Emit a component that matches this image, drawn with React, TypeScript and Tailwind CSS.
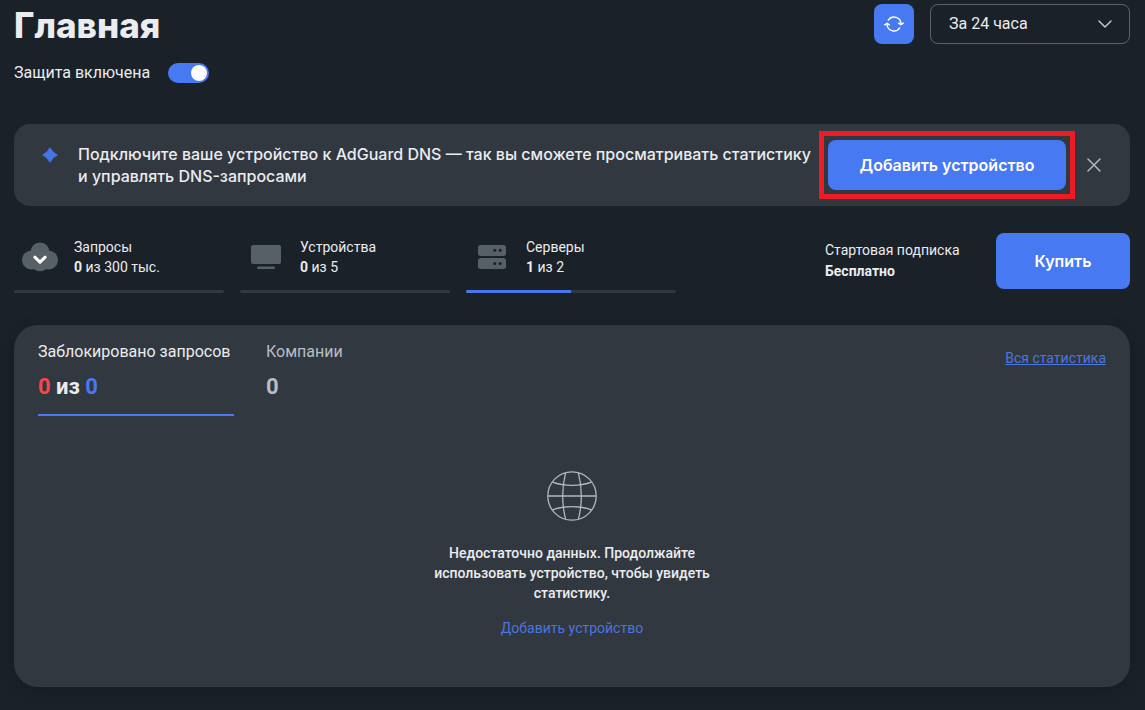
import { useState } from "react";
import type { ReactNode } from "react";

function RefreshIcon() {
  return (
    <svg width="20" height="20" viewBox="0 0 20 20" fill="none" stroke="currentColor" strokeWidth="1.4" strokeLinecap="round" strokeLinejoin="round" aria-hidden="true">
      <path d="M4.3 6.1A6.9 6.9 0 0 1 16.9 10.4" />
      <path d="M15.7 13.9A6.9 6.9 0 0 1 3.1 9.6" />
      <path d="M14.7 9.1L16.9 10.7L19.2 9.1" />
      <path d="M0.8 10.9L3.1 9.3L5.3 10.9" />
    </svg>
  );
}

function ChevronIcon() {
  return (
    <svg width="14" height="8" viewBox="0 0 14 8" fill="none" stroke="currentColor" strokeWidth="1.5" strokeLinecap="round" strokeLinejoin="round" aria-hidden="true">
      <path d="M1 1L7 7L13 1" />
    </svg>
  );
}

function SparkIcon() {
  return (
    <svg width="16" height="16" viewBox="0 0 16 16" fill="#4377ea" aria-hidden="true">
      <path d="M8 0.6Q10.4 5.6 15.4 8Q10.4 10.4 8 15.4Q5.6 10.4 0.6 8Q5.6 5.6 8 0.6Z" stroke="#4377ea" strokeWidth="0.8" strokeLinejoin="round" />
    </svg>
  );
}

function CloseIcon() {
  return (
    <svg width="14" height="14" viewBox="0 0 14 14" fill="none" stroke="currentColor" strokeWidth="1.5" strokeLinecap="round" aria-hidden="true">
      <path d="M1 1L13 13M13 1L1 13" />
    </svg>
  );
}

function CloudIcon() {
  return (
    <svg width="36" height="30" viewBox="0 0 36 30" aria-hidden="true">
      <g fill="#575f67">
        <circle cx="18" cy="9.7" r="9.3" />
        <circle cx="9.6" cy="18" r="9.6" />
        <circle cx="26.4" cy="18" r="9.6" />
        <ellipse cx="18" cy="20.5" rx="9" ry="8.8" />
      </g>
      <path d="M12.8 15.2L18 20.2L23.2 15.2" fill="none" stroke="#fff" strokeWidth="3" strokeLinecap="round" />
    </svg>
  );
}

function MonitorIcon() {
  return (
    <svg width="30" height="24" viewBox="0 0 30 24" fill="#575f67" aria-hidden="true">
      <rect width="30" height="19" rx="2" />
      <rect x="6" y="21.5" width="18" height="2.5" rx="1.2" />
    </svg>
  );
}

function ServerIcon() {
  return (
    <svg width="28" height="24" viewBox="0 0 28 24" aria-hidden="true">
      <g fill="#575f67">
        <rect width="28" height="11" rx="2.5" />
        <rect y="13" width="28" height="11" rx="2.5" />
      </g>
      <g fill="#1a2129">
        <circle cx="16.8" cy="5.3" r="1.5" />
        <circle cx="22.2" cy="5.3" r="1.5" />
        <circle cx="16.8" cy="18.6" r="1.5" />
        <circle cx="22.2" cy="18.6" r="1.5" />
      </g>
    </svg>
  );
}

function GlobeIcon() {
  return (
    <svg width="50" height="50" viewBox="0 0 50 50" fill="none" stroke="#b3b8bd" strokeWidth="1.3" aria-hidden="true">
      <circle cx="25" cy="25" r="24.2" />
      <path d="M1 25H49" />
      <path d="M18.6 1.8C15 16 15 34 18.6 48.2M31.4 1.8C35 16 35 34 31.4 48.2" />
      <path d="M5.4 11.2C17 15.4 33 15.4 44.6 11.2M5.4 38.8C17 34.6 33 34.6 44.6 38.8" />
    </svg>
  );
}

type LimitProps = { label: string; used: number; total: string; percent: number; icon: ReactNode };

function Limit({ label, used, total, percent, icon }: LimitProps) {
  return (
    <div className="w-[210px]">
      <div className="flex items-center">
        <div className="flex w-[52px] shrink-0 justify-center">{icon}</div>
        <div className="pl-2 text-sm leading-5">
          <div>{label}</div>
          <div>
            <b>{used}</b> из {total}
          </div>
        </div>
      </div>
      <div className="mt-[13px] h-[3px] overflow-hidden rounded-full bg-[#323840]">
        <div className="h-full bg-[#4778f0]" style={{ width: `${percent}%` }} />
      </div>
    </div>
  );
}

export default function App() {
  const [enabled, setEnabled] = useState(true);
  const [bannerOpen, setBannerOpen] = useState(true);

  return (
    <main className="min-h-screen bg-[#1a2129] pt-1 pr-[15px] pb-6 pl-[14px] font-['Roboto','Noto_Sans',sans-serif] text-[#ebecee]">
      <header className="flex items-start justify-between">
        <h1 className="font-['Inter','Noto_Sans',sans-serif] text-[35px] leading-[42px] font-extrabold">Главная</h1>
        <div className="flex gap-4">
          <button type="button" aria-label="Обновить" className="flex size-10 items-center justify-center rounded-lg bg-[#4779f2] text-white">
            <RefreshIcon />
          </button>
          <div className="relative">
            <select aria-label="Период" className="h-10 w-[200px] appearance-none rounded-lg border border-[#5b626a] bg-transparent px-[18px] text-base">
              <option>За 24 часа</option>
            </select>
            <span className="pointer-events-none absolute top-4 right-[18px] text-[#c3c6ca]">
              <ChevronIcon />
            </span>
          </div>
        </div>
      </header>

      <label className="mt-[14px] flex w-fit items-center gap-[18px] text-base leading-[26px]">
        Защита включена
        <input
          type="checkbox"
          role="switch"
          checked={enabled}
          onChange={(e) => setEnabled(e.target.checked)}
          className="h-5 w-[41px] appearance-none rounded-full bg-[#575f67] p-[2px] before:block before:size-4 before:rounded-full before:bg-white checked:bg-[#4779f2] checked:before:ml-[21px]"
        />
      </label>

      {bannerOpen && (
        <section className="mt-[38px] flex min-h-[82px] items-center rounded-2xl bg-[#323840] pr-[22px] pl-7">
          <div className="flex flex-1 gap-5">
            <span className="mt-1 shrink-0">
              <SparkIcon />
            </span>
            <p className="font-['Inter','Noto_Sans',sans-serif] text-base leading-[22px] font-medium">
              Подключите ваше устройство к AdGuard DNS — так вы сможете просматривать статистику и&nbsp;управлять DNS-запросами
            </p>
          </div>
          <div className="shrink-0 border-5 border-[#ed1c24] p-1">
            <button type="button" className="h-[50px] w-[238px] rounded-lg bg-[#4779f2] font-['Inter','Noto_Sans',sans-serif] text-base font-semibold text-white">
              Добавить устройство
            </button>
          </div>
          <button type="button" aria-label="Закрыть" onClick={() => setBannerOpen(false)} className="ml-[5px] flex size-7 shrink-0 items-center justify-center text-[#b3b8bd]">
            <CloseIcon />
          </button>
        </section>
      )}

      <section className="mt-[27px] flex items-start justify-between">
        <div className="flex gap-4 pt-1">
          <Limit label="Запросы" used={0} total="300 тыс." percent={0} icon={<CloudIcon />} />
          <Limit label="Устройства" used={0} total="5" percent={0} icon={<MonitorIcon />} />
          <Limit label="Серверы" used={1} total="2" percent={50} icon={<ServerIcon />} />
        </div>
        <div className="flex items-center gap-8">
          <div className="min-w-[139px] text-sm leading-[21px]">
            <div>Стартовая подписка</div>
            <div className="font-bold">Бесплатно</div>
          </div>
          <button type="button" className="h-14 w-[134px] rounded-lg bg-[#4779f2] font-['Inter','Noto_Sans',sans-serif] text-base font-semibold text-white">
            Купить
          </button>
        </div>
      </section>

      <section className="mt-8 rounded-3xl bg-[#323840] px-6 pt-4 pb-[49px] shadow-[0_4px_16px_rgba(0,0,0,0.15)]">
        <div className="flex items-start justify-between">
          <div className="flex gap-8">
            <button type="button" className="min-w-[196px] border-b-2 border-[#4779f2] pb-[13px] text-left">
              <span className="block text-base leading-[22px]">Заблокировано запросов</span>
              <span className="mt-[10px] block text-[22px] leading-7 font-bold">
                <span className="text-[#f9474b]">0</span> из <span className="text-[#4779f2]">0</span>
              </span>
            </button>
            <button type="button" className="border-b-2 border-transparent pb-[13px] text-left text-[#b9bdc6]">
              <span className="block text-base leading-[22px]">Компании</span>
              <span className="mt-[10px] block text-[22px] leading-7 font-bold">0</span>
            </button>
          </div>
          <a href="#stats" className="mt-[7px] text-sm leading-5 text-[#4a76df] underline">
            Вся статистика
          </a>
        </div>
        <div className="mt-[55px] flex flex-col items-center">
          <GlobeIcon />
          <p className="mt-[22px] w-[290px] text-center text-sm leading-5 font-medium">
            Недостаточно данных. Продолжайте использовать устройство, чтобы увидеть статистику.
          </p>
          <a href="#add-device" className="mt-[15px] text-sm leading-5 text-[#4a76df]">
            Добавить устройство
          </a>
        </div>
      </section>
    </main>
  );
}
